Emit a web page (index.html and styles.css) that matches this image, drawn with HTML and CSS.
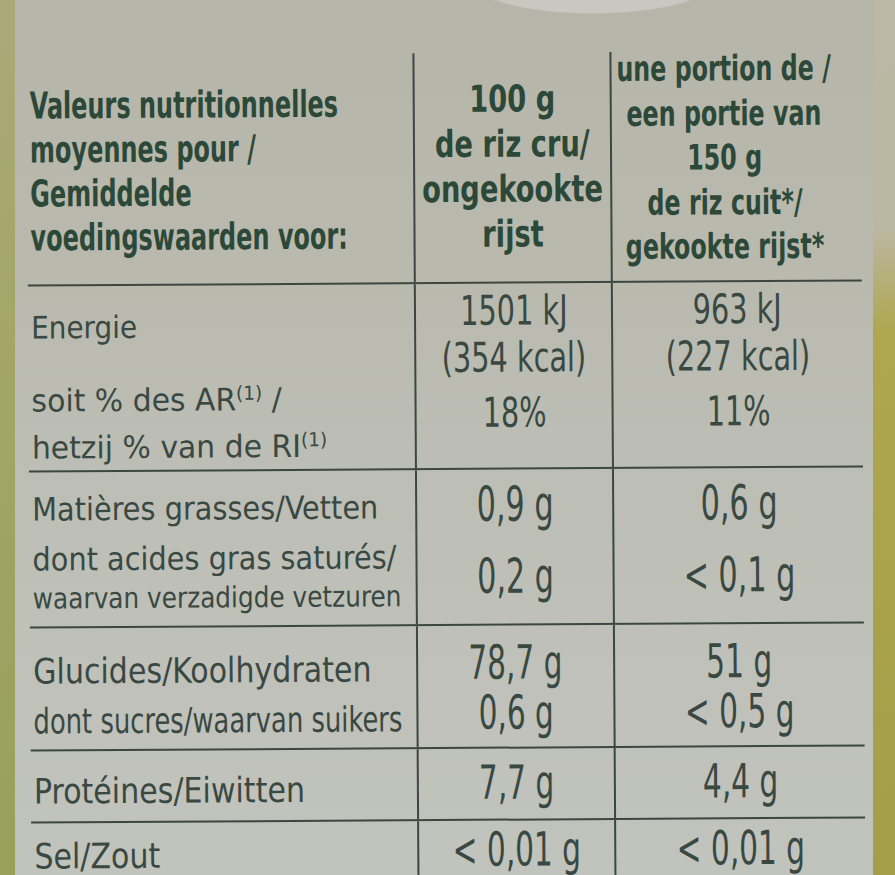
FILE: index.html
```html
<!DOCTYPE html>
<html lang="fr">
<head>
<meta charset="utf-8">
<title>Valeurs nutritionnelles</title>
<link rel="stylesheet" href="styles.css">
</head>
<body>
<div class="page">
  <div class="edge-l"></div>
  <div class="paper">
    <div class="table">
      <div class="row r-head">
        <div class="c c1 hd">
          <div class="ln s-h1">Valeurs nutritionnelles</div>
          <div class="ln s-h1">moyennes pour /</div>
          <div class="ln s-h1">Gemiddelde</div>
          <div class="ln s-h1">voedingswaarden voor:</div>
        </div>
        <div class="c c2 hd">
          <div class="ln s-h2">100 g</div>
          <div class="ln s-h2">de riz cru/</div>
          <div class="ln s-h2">ongekookte</div>
          <div class="ln s-h2">rijst</div>
        </div>
        <div class="c c3 hd hd3">
          <div class="ln s-h3 first">une portion de /</div>
          <div class="ln s-h3">een portie van</div>
          <div class="ln s-h3">150 g</div>
          <div class="ln s-h3">de riz cuit*/</div>
          <div class="ln s-h3">gekookte rijst*</div>
        </div>
      </div>

      <div class="row r-energy">
        <div class="c c1 lb-e">
          <div class="ln">Energie</div>
          <div class="ln s-ri gap-e">soit % des AR<sup class="ref">(1)</sup> /</div>
          <div class="ln s-ri">hetzij % van de RI<sup class="ref">(1)</sup></div>
        </div>
        <div class="c c2 nm-e">
          <div class="ln s-ne">1501 kJ</div>
          <div class="ln s-ne">(354 kcal)</div>
          <div class="ln s-ne gap-p">18%</div>
        </div>
        <div class="c c3 nm-e">
          <div class="ln s-ne">963 kJ</div>
          <div class="ln s-ne">(227 kcal)</div>
          <div class="ln s-ne gap-p">11%</div>
        </div>
      </div>

      <div class="row r-fat">
        <div class="c c1 lb-f">
          <div class="ln">Matières grasses/Vetten</div>
          <div class="ln">dont acides gras saturés/</div>
          <div class="ln small">waarvan verzadigde vetzuren</div>
        </div>
        <div class="c c2 nm-f">
          <div class="ln s-n">0,9 g</div>
          <div class="ln s-n">0,2 g</div>
        </div>
        <div class="c c3 nm-f">
          <div class="ln s-n">0,6 g</div>
          <div class="ln s-n">&lt; 0,1 g</div>
        </div>
      </div>

      <div class="row r-carb">
        <div class="c c1 lb-c">
          <div class="ln s-l">Glucides/Koolhydraten</div>
          <div class="ln s-sug">dont sucres/waarvan suikers</div>
        </div>
        <div class="c c2 nm-c">
          <div class="ln s-n">78,7 g</div>
          <div class="ln s-n">0,6 g</div>
        </div>
        <div class="c c3 nm-c">
          <div class="ln s-n">51 g</div>
          <div class="ln s-n">&lt; 0,5 g</div>
        </div>
      </div>

      <div class="row r-prot">
        <div class="c c1 lb-p">
          <div class="ln s-l">Protéines/Eiwitten</div>
        </div>
        <div class="c c2 nm-p">
          <div class="ln s-n">7,7 g</div>
        </div>
        <div class="c c3 nm-p">
          <div class="ln s-n">4,4 g</div>
        </div>
      </div>

      <div class="row r-salt">
        <div class="c c1 lb-s">
          <div class="ln s-l">Sel/Zout</div>
        </div>
        <div class="c c2 nm-s">
          <div class="ln s-n">&lt; 0,01 g</div>
        </div>
        <div class="c c3 nm-s">
          <div class="ln s-n">&lt; 0,01 g</div>
        </div>
      </div>
    </div>
  </div>
  <div class="edge-r"></div>
</div>
</body>
</html>
```

FILE: styles.css
```css
* { box-sizing: border-box; }

html, body {
  margin: 0;
  padding: 0;
}

body {
  width: 895px;
  height: 875px;
  overflow: hidden;
  font-family: "DejaVu Sans Condensed", "DejaVu Sans", sans-serif;
  color: #3a4842;
}

.page {
  display: flex;
  width: 895px;
  height: 875px;
  overflow: hidden;
}

.edge-l {
  flex: none;
  width: 15px;
  background: linear-gradient(to bottom, #aba979 0%, #a4a566 40%, #97a15a 100%);
}

.paper {
  flex: 1;
  padding: 53px 0 0 14px;
  background:
    radial-gradient(ellipse 122px 32px at 578px -18px, #c9c7bf 96%, rgba(201, 199, 191, 0) 100%),
    linear-gradient(to bottom, #b6b5a9 0%, #b9b9ae 30%, #bec0b8 65%, #c1c3bd 100%);
}

.edge-r {
  flex: none;
  width: 22px;
  background: linear-gradient(to bottom, #bdb8a5 0%, #bcb7a3 26%, #aea74f 38%, #a49e48 100%);
}

.table {
  width: 834px;
  transform: rotate(-0.35deg);
  transform-origin: 50% 50%;
}

.row {
  display: grid;
  grid-template-columns: 386px 197px 251px;
  border-bottom: 2px solid #3d4741;
}

.r-head { height: 231px; }
.r-energy { height: 186px; }
.r-fat { height: 156px; }
.r-carb { height: 123px; }
.r-prot { height: 72px; }
.r-salt { height: 80px; border-bottom: none; }

.c {
  min-width: 0;
}

.c1 {
  padding-left: 3px;
}

.c2, .c3 {
  border-left: 2px solid #3d4741;
  display: flex;
  flex-direction: column;
  align-items: center;
}

.ln {
  white-space: nowrap;
}

.c1 .ln { transform-origin: 0 50%; }
.c2 .ln, .c3 .ln { transform-origin: 50% 50%; }

/* header */
.hd {
  font-weight: 700;
  font-size: 37px;
  line-height: 44px;
  color: #2c4838;
}
.r-head .c1 { padding-top: 29px; }
.r-head .c2 { padding-top: 24px; line-height: 45px; }
.hd3 {
  font-size: 35px;
  line-height: 44.5px;
  padding-right: 24px;
}
.hd3 .first { margin-top: -5px; }

.s-h1 { transform: scaleX(0.72); }
.s-h2 { transform: scaleX(0.82); }
.s-h3 { transform: scaleX(0.755); }

/* energy */
.lb-e {
  font-size: 31px;
  line-height: 47px;
  padding-top: 18px;
}
.gap-e { margin-top: 26px; }
.s-ri { transform: scaleX(1.07); }

.ref {
  font-size: 0.62em;
  vertical-align: 0.55em;
  line-height: 0;
}

.nm-e {
  font-size: 41px;
  line-height: 47px;
  padding-top: 4px;
}
.gap-p { margin-top: 8px; }
.s-ne { transform: scaleX(0.78); }

/* fat */
.lb-f {
  font-size: 32px;
  line-height: 50px;
  padding-top: 12px;
}
.lb-f .small {
  font-size: 29px;
  line-height: 38px;
  margin-top: -5px;
  transform: scaleX(0.95);
}

.nm-f {
  font-size: 48px;
  line-height: 72px;
  padding-top: 0;
}
.nm-f .ln:first-child { margin-top: -2px; }

.s-n { transform: scaleX(0.7); }

/* carbs, proteins, salt */
.lb-c, .lb-p, .lb-s {
  font-size: 35px;
  line-height: 50px;
}
.lb-c { padding-top: 18px; }
.lb-p { padding-top: 15px; }
.lb-s { padding-top: 8px; }

.s-l { transform: scaleX(0.955); }
.s-sug { transform: scaleX(0.82); }

.nm-c, .nm-p, .nm-s {
  font-size: 47px;
  line-height: 50px;
}
.nm-c { padding-top: 12px; }
.nm-p { padding-top: 9px; }
.nm-s { padding-top: 4px; }
```
